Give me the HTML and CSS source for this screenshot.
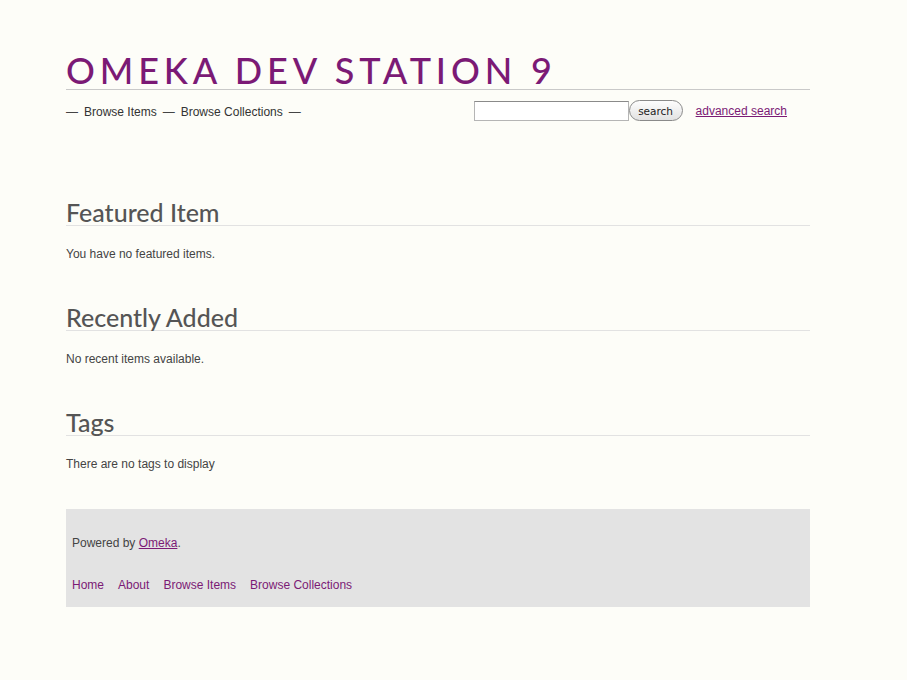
FILE: index.html
```html
<!DOCTYPE html>
<html>
<head>
<meta charset="utf-8">
<title>Omeka Dev Station 9</title>
<link rel="stylesheet" href="styles.css">
</head>
<body>
<div class="wrap">
  <header class="header">
    <h1 class="site-title"><a href="#">Omeka Dev Station 9</a></h1>
    <div class="bar">
      <ul class="nav">
        <li class="dash">—</li>
        <li><a href="#">Browse Items</a></li>
        <li class="dash">—</li>
        <li><a href="#">Browse Collections</a></li>
        <li class="dash">—</li>
      </ul>
      <form class="search">
        <input class="search-input" type="text">
        <button class="search-btn" type="button">search</button>
        <a class="adv" href="#">advanced search</a>
      </form>
    </div>
  </header>

  <main class="content">
    <section class="block">
      <h2 class="block-title">Featured Item</h2>
      <p class="block-text">You have no featured items.</p>
    </section>
    <section class="block">
      <h2 class="block-title">Recently Added</h2>
      <p class="block-text">No recent items available.</p>
    </section>
    <section class="block">
      <h2 class="block-title">Tags</h2>
      <p class="block-text">There are no tags to display</p>
    </section>
  </main>

  <footer class="footer">
    <p class="powered">Powered by <a href="#">Omeka</a>.</p>
    <ul class="foot-nav">
      <li><a href="#">Home</a></li>
      <li><a href="#">About</a></li>
      <li><a href="#">Browse Items</a></li>
      <li><a href="#">Browse Collections</a></li>
    </ul>
  </footer>
</div>
</body>
</html>
```
FILE: styles.css
```css
html, body {
  margin: 0;
  padding: 0;
  background: #fdfdf8;
}
body {
  font-family: "Liberation Sans", Arial, sans-serif;
  font-size: 12px;
  color: #444;
}
.wrap {
  width: 744px;
  margin-left: 66px;
}
.header {
  padding-top: 52px;
}
.site-title {
  margin: 0;
  font-family: Lato, "DejaVu Sans", sans-serif;
  font-weight: 500;
  font-size: 36px;
  line-height: 37px;
  letter-spacing: 4.85px;
  text-transform: uppercase;
  border-bottom: 1px solid #c9c9c9;
}
.site-title a {
  color: #7b1a75;
  text-decoration: none;
}
.bar {
  display: flex;
  justify-content: space-between;
  align-items: flex-start;
  padding-top: 11px;
}
.nav {
  list-style: none;
  margin: 4px 0 0;
  padding: 0;
  display: flex;
  gap: 6px;
}
.nav a {
  color: #333;
  text-decoration: none;
  font-size: 12px;
}
.dash {
  color: #444;
}
.search {
  display: flex;
  align-items: center;
  margin: -1px 23px 0 0;
}
.search-input {
  box-sizing: border-box;
  width: 155px;
  height: 20px;
  margin: 0;
  padding: 1px;
  border: 1px solid #b5b5b5;
  border-top-color: #8a8a8a;
  background: #fff;
}
.search-btn {
  box-sizing: border-box;
  width: 54px;
  height: 21px;
  margin: 0;
  padding: 0;
  border: 1px solid #8a8a8a;
  border-radius: 11px;
  background: linear-gradient(#fdfdfd, #e2e2e2);
  font-family: "DejaVu Sans", sans-serif;
  font-size: 10.5px;
  color: #222;
}
.adv {
  margin-left: 13px;
  color: #7b1a75;
  font-size: 12px;
}
.content {
  padding-top: 78px;
}
.block {
  margin-bottom: 36px;
}
.block-title {
  margin: 0;
  font-family: Lato, "DejaVu Sans", sans-serif;
  font-weight: 500;
  font-size: 25px;
  line-height: 26px;
  color: #555;
  border-bottom: 1px solid #e2e2e2;
}
.block-text {
  margin: 14px 0 0;
  font-size: 12px;
  line-height: 28px;
}
.footer {
  margin-top: -5px;
  background: #e3e3e3;
  padding: 26px 6px 14px;
}
.powered {
  margin: 0;
  line-height: 16px;
  color: #444;
}
.powered a {
  color: #7b1a75;
}
.foot-nav {
  list-style: none;
  margin: 26px 0 0;
  padding: 0;
  display: flex;
  gap: 14px;
  line-height: 16px;
}
.foot-nav a {
  color: #7b1a75;
  text-decoration: none;
}
```
